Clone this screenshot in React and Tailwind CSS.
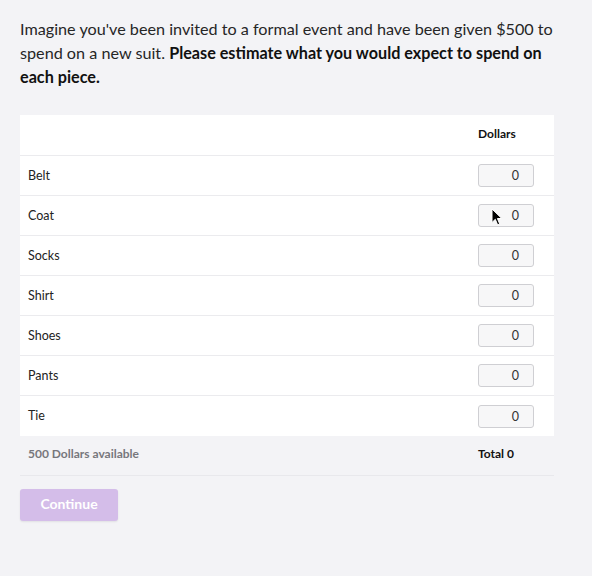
import React from "react";

const items = ["Belt", "Coat", "Socks", "Shirt", "Shoes", "Pants", "Tie"];

function Cursor() {
  return (
    <svg className="absolute left-[13px] top-[4px]" width="12" height="18" viewBox="0 0 12 18">
      <path d="M1 1 L1 14.5 L4.3 11.3 L6.6 16.8 L8.7 15.9 L6.4 10.5 L10.8 10.5 Z" fill="#000" stroke="#fff" strokeWidth="1" strokeLinejoin="round" />
    </svg>
  );
}

export default function App() {
  return (
    <div className="w-[592px] h-[576px] bg-[#f3f3f6] px-5 pt-[17px] text-[#1a1a1a]" style={{ fontFamily: "Lato, 'Noto Sans', sans-serif" }}>
      <p className="text-[16.2px] leading-[24px] text-[#262626]">
        Imagine you've been invited to a formal event and have been given $500 to spend on a new suit.{" "}
        <span className="font-bold text-[#111]">Please estimate what you would expect to spend on each piece.</span>
      </p>
      <div className="mt-[26px] w-[534px]">
        <div className="bg-white">
          <div className="flex h-[41px] items-center border-b border-[#ebebee] pb-[3px]">
            <div className="flex-1" />
            <div className="w-[76px] text-[12px] font-bold text-[#111]">Dollars</div>
          </div>
          {items.map((it, i) => (
            <div key={it} className={"flex h-[40px] items-center px-2 " + (i < items.length - 1 ? "border-b border-[#ebebee]" : "")}>
              <div className="flex-1 pt-[1px] text-[12.5px] text-[#222]">{it}</div>
              <div className="relative mr-[12px] w-[56px]">
                <div className="h-[23px] w-[56px] rounded-[3px] border border-[#cfcfd3] bg-[#f7f7f8] pr-[14px] text-right text-[12.5px] leading-[21px] text-[#333]">0</div>
                {it === "Coat" && <Cursor />}
              </div>
            </div>
          ))}
        </div>
        <div className="flex h-[40px] items-center border-b border-[#e8e8ec] px-2 pb-[4px]">
          <div className="flex-1 text-[12px] font-bold text-[#77777c]">500 Dollars available</div>
          <div className="w-[68px] text-[12px] font-bold text-[#111]">Total 0</div>
        </div>
      </div>
      <button className="mt-[13px] h-[32px] w-[98px] rounded-[3px] bg-[#d4bde9] pb-[3px] text-[14px] font-bold text-white shadow-[0_1px_2px_rgba(0,0,0,0.08)]">
        Continue
      </button>
    </div>
  );
}
